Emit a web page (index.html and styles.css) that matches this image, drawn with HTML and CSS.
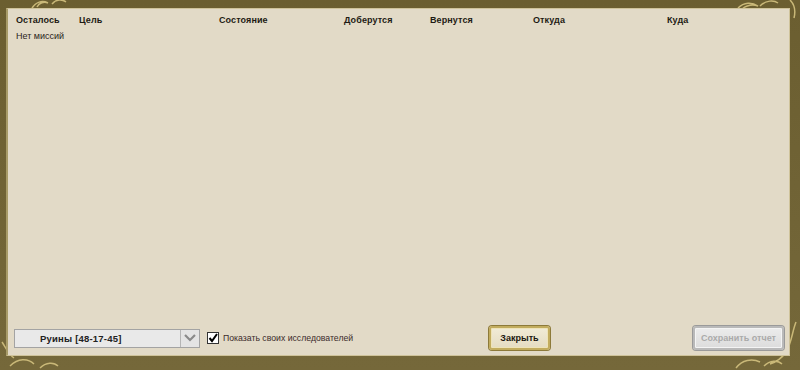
FILE: index.html
```html
<!DOCTYPE html>
<html>
<head>
<meta charset="utf-8">
<link rel="stylesheet" href="styles.css">
</head>
<body>
<div class="frame">
  <svg class="orn orn-tl" width="70" height="12" viewBox="0 0 70 12"><path d="M4 10 C8 4 14 2 20 5 C16 3 11 5 9 9 M24 6 C28 1 34 1 38 4" fill="none" stroke="#c9b878" stroke-width="1.5"/></svg>
  <svg class="orn orn-tr" width="70" height="40" viewBox="0 0 70 40"><path d="M8 8 C14 2 22 2 28 6 C22 4 16 6 12 9 M30 6 C36 0 44 0 48 3 M60 0 C64 4 66 10 64 18" fill="none" stroke="#c9b878" stroke-width="1.5"/></svg>
  <svg class="orn orn-bl" width="70" height="30" viewBox="0 0 70 30"><path d="M2 2 C6 8 8 14 14 18 M10 26 C18 18 28 18 34 24 M40 28 C46 22 54 22 58 26" fill="none" stroke="#c9b878" stroke-width="1.5"/></svg>
  <svg class="orn orn-br" width="70" height="50" viewBox="0 0 70 50"><path d="M6 48 C12 40 22 38 30 42 M34 46 C40 40 48 40 52 44 M66 2 C62 12 62 22 56 32 C52 38 46 42 40 44" fill="none" stroke="#c9b878" stroke-width="1.5"/></svg>
  <div class="panel">
    <div class="thead">
      <span>Осталось</span>
      <span>Цель</span>
      <span>Состояние</span>
      <span>Доберутся</span>
      <span>Вернутся</span>
      <span>Откуда</span>
      <span>Куда</span>
    </div>
    <div class="empty">Нет миссий</div>
    <div class="bottom">
      <div class="select">
        <div class="select-text">Руины [48-17-45]</div>
        <div class="select-btn">
          <svg width="12" height="8" viewBox="0 0 12 8"><path d="M1 1 L6 6 L11 1" fill="none" stroke="#8a8a8a" stroke-width="2.2"/></svg>
        </div>
      </div>
      <label class="check">
        <span class="box"><svg width="10" height="10" viewBox="0 0 10 10"><path d="M1.5 5 L4 8 L9 1" fill="none" stroke="#000" stroke-width="2"/></svg></span>
        <span class="check-label">Показать своих исследователей</span>
      </label>
      <button class="btn btn-close">Закрыть</button>
      <button class="btn btn-save">Сохранить отчет</button>
    </div>
  </div>
</div>
</body>
</html>
```
FILE: styles.css
```css
html, body {
  margin: 0;
  padding: 0;
  background: #6f6233;
}
.frame {
  position: relative;
  width: 800px;
  height: 370px;
  box-sizing: border-box;
  padding: 8px 10px 14px 6px;
  background: linear-gradient(#6b5e30, #75683a);
  font-family: "Liberation Sans", Arial, sans-serif;
}
.orn {
  position: absolute;
}
.orn-tl { left: 28px; top: -2px; }
.orn-tr { right: 0; top: 0; }
.orn-bl { left: 0; bottom: 0; }
.orn-br { right: 0; bottom: 0; }
.panel {
  position: relative;
  height: 100%;
  box-sizing: border-box;
  background: #e2dac7;
  border: 1px solid #cfc39a;
  border-left: 2px solid #a89b68;
  display: flex;
  flex-direction: column;
  padding: 0 4px 5px 8px;
}
.thead {
  display: grid;
  grid-template-columns: 63px 140px 125px 86px 103px 134px 1fr;
  font-weight: bold;
  font-size: 9px;
  letter-spacing: 0.1px;
  color: #1e1a14;
  padding-top: 4px;
  height: 14px;
  line-height: 14px;
}
.empty {
  font-size: 9px;
  color: #2a241c;
  margin-top: 2px;
  line-height: 14px;
}
.bottom {
  margin-top: auto;
  display: flex;
  align-items: center;
  height: 24px;
  white-space: nowrap;
}
.select {
  flex-shrink: 0;
  display: flex;
  width: 186px;
  height: 19px;
  box-sizing: border-box;
  border: 1px solid #a3a3a3;
  background: #e9e9e9;
  margin-left: -2px;
}
.select-text {
  flex: 1;
  font-size: 9.5px;
  font-weight: bold;
  letter-spacing: 0.2px;
  color: #222;
  line-height: 17px;
  padding-left: 25px;
  border-right: 1px solid #b5b5b5;
}
.select-btn {
  width: 18px;
  display: flex;
  align-items: center;
  justify-content: center;
  background: #e4e4e4;
}
.check {
  flex-shrink: 0;
  width: 275px;
  display: flex;
  align-items: center;
  margin-left: 7px;
}
.box {
  width: 10px;
  height: 10px;
  border: 1px solid #333;
  background: #fff;
  display: flex;
  align-items: center;
  justify-content: center;
}
.check-label {
  font-size: 8.7px;
  color: #3b2b2b;
  margin-left: 4px;
}
.btn {
  flex-shrink: 0;
  height: 24px;
  box-sizing: border-box;
  font-family: "Liberation Sans", Arial, sans-serif;
  font-size: 9px;
  font-weight: bold;
  border-radius: 3px;
  padding: 0;
}
.btn-close {
  margin-left: 7px;
  width: 61px;
  color: #1b1710;
  background: linear-gradient(#f1ebd6, #e5dcc2);
  border: 2px solid #c2ac5e;
  box-shadow: inset 0 0 0 1px #eee3b8, 0 0 0 1px #8d7a3a;
}
.btn-save {
  margin-left: 143px;
  width: 91px;
  color: #aaa;
  background: linear-gradient(#ececec, #dcdcdc);
  border: 2px solid #b9b9b9;
  box-shadow: inset 0 0 0 1px #f4f4f4, 0 0 0 1px #9a9a9a;
}
```
